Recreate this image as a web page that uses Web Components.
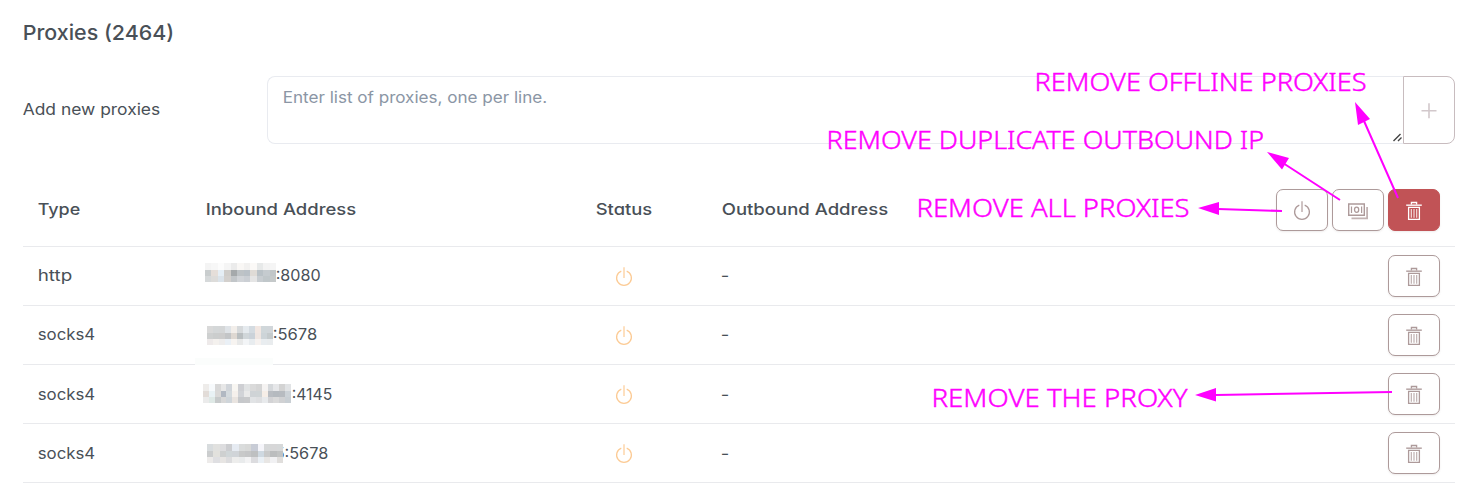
<!DOCTYPE html>
<html lang="en">
<head>
<meta charset="utf-8">
<title>Proxies</title>
<style>
html,body{margin:0;background:#fff}
body{width:1481px;height:490px;overflow:hidden;font-family:Inter,"Open Sans",sans-serif;font-size:16px;color:#495057;font-feature-settings:"cv11"}
</style>
</head>
<body>
<proxy-page></proxy-page>
<script>
const define = (name, html, setup) => {
  const t = document.createElement('template');
  t.innerHTML = html;
  customElements.define(name, class extends HTMLElement {
    connectedCallback() {
      if (this.shadowRoot) return;
      this.attachShadow({mode: 'open'}).append(t.content.cloneNode(true));
      if (setup) setup(this, this.shadowRoot);
    }
  });
};

/* Text run stretched to a given width. */
define('fit-text', `<style>:host{display:inline-block;white-space:nowrap;line-height:24px}span{display:inline-block;transform-origin:0 50%}</style><span><slot></slot></span>`,
(el, root) => {
  const s = root.querySelector('span');
  const want = +el.getAttribute('w');
  el.style.width = want + 'px';
  s.style.transform = `translate(-.3px,var(--dy,-1px)) scaleX(${(want - .5) / s.getBoundingClientRect().width})`;
});

const icons = {
  power: `<path d="M6.3 4.1A7.4 7.4 0 1 0 11.7 4.1" stroke-width="1.25"/><path d="M9 .2V11" stroke-width="1.6" opacity=".75"/>`,
  trash: `<path d="M1.2 4.2H16.8" stroke-width="1.6" opacity=".85"/><path d="M6.4 3.5V1.5H11.6V3.5M3.6 6.4H14.4V18.4H3.6Z" stroke-width="1.3"/><path d="M6.3 8V16.8M9 8V16.8M11.7 8V16.8" stroke-width="1.1" opacity=".85"/>`,
  cash: `<path d="M-.3 3H15.3V14.2H-.3Z" stroke-width="1.4"/><path d="M2.5 5.4V12M12.6 5.4V12" stroke-width="1.2"/><ellipse cx="7.6" cy="8.7" rx="2.1" ry="2.6" stroke-width="1.3"/><path d="M18.1 6V17.4H2.5" stroke-width="1.8" opacity=".75"/>`,
  plus: `<path d="M1.5 9.7H16.5M9 2.2V17.2" stroke-width="1.6"/>`
};
define('line-icon', `<style>:host{display:block;width:18px;height:19px}svg{display:block;overflow:visible}</style><svg width="18" height="19" viewBox="0 0 18 19" fill="none" stroke="currentColor"></svg>`,
(el, root) => { root.querySelector('svg').innerHTML = icons[el.getAttribute('name')]; });

define('icon-button', `<style>
:host{display:block;width:52px;height:42px;flex:none;color:#ad9a9a}
button{box-sizing:border-box;width:100%;height:100%;margin:0;padding:1px 0 0;display:flex;align-items:center;justify-content:center;background:#fff;border:1px solid #ad9a9a;border-radius:7px;color:inherit;box-shadow:0 1px 2px rgba(90,70,70,.10)}
:host([danger]) button{background:#c15356;border-color:#c15356;color:#fff}
:host([joined]){height:68px}
:host([joined]) button{border-color:#c8bcbf;border-radius:0 8px 8px 0;color:#d2c8cb;box-shadow:none}
</style><button><line-icon></line-icon></button>`,
(el, root) => {
  const i = document.createElement('line-icon');
  i.setAttribute('name', el.getAttribute('icon'));
  root.querySelector('line-icon').replaceWith(i);
});

/* Pixelated mask over the hidden part of an address. */
define('pixel-mask', `<style>:host{display:grid;grid-template-rows:7px 6px 6px;height:19px;flex:none;position:relative;z-index:1}</style>`,
(el, root) => {
  const rows = el.getAttribute('colors').split('|').map(r => r.trim().split(' '));
  el.style.width = el.getAttribute('w') + 'px';
  el.style.gridTemplateColumns = `repeat(${rows[0].length},1fr)`;
  rows.flat().forEach(c => { const d = document.createElement('div'); d.style.background = '#' + c; root.append(d); });
});

define('proxy-row', `<style>
:host{display:grid;grid-template-columns:168px 359px 156px 1fr 67px;box-sizing:border-box;height:59px;align-items:center;border-bottom:1px solid #e9eaed;padding-left:15px}
.address{display:flex;align-items:center;height:24px}
.status{color:#fccb95;padding-left:50px;padding-top:1px}
.last{padding-right:15px}
</style>
<div><slot name="type"></slot></div><div class="address"><slot name="address"></slot></div><div class="status"><line-icon name="power"></line-icon></div><div><slot name="outbound"></slot></div><div class="last"><icon-button icon="trash"></icon-button></div>`);

define('note-layer', `<style>:host{position:absolute;left:0;top:0;pointer-events:none;z-index:3}svg{display:block}text{font-family:"Noto Sans","Open Sans",sans-serif;font-weight:300;font-size:25.5px;font-feature-settings:normal;stroke:#f0f;stroke-width:.45px}</style>
<svg width="1481" height="490" fill="#f0f"><g stroke="#f0f" stroke-width="2">
<path d="M1398 198L1364 121M1340 200L1283 163M1282 211L1218 209M1392 392L1216 395"/></g>
<path d="M1355 102L1370 119L1358 125ZM1267 152L1289 158L1282 169.500ZM1198 208L1219 202V215ZM1195 395L1216 388V401.500Z"/>
<text x="1034.500" y="91" textLength="332" lengthAdjust="spacingAndGlyphs">REMOVE OFFLINE PROXIES</text>
<text x="826.500" y="149" textLength="437.500" lengthAdjust="spacingAndGlyphs">REMOVE DUPLICATE OUTBOUND IP</text>
<text x="916.500" y="217" textLength="273" lengthAdjust="spacingAndGlyphs">REMOVE ALL PROXIES</text>
<text x="931.500" y="407" textLength="256" lengthAdjust="spacingAndGlyphs">REMOVE THE PROXY</text></svg>`);

define('proxy-page', `<style>
:host{display:block;position:relative;width:1481px;height:490px;box-sizing:border-box;padding:21px 26px 0 23px}
h1{--dy:0px;margin:0;font-size:20.5px;font-weight:500;line-height:24px;height:55px}
.low{--dy:0px}
.add{display:flex;height:68px;align-items:stretch}
.label{width:244px;display:flex;align-items:center}
.field{flex:1;box-sizing:border-box;border:1px solid #e9ebf0;border-right:0;border-radius:8px 0 0 8px;padding:9px 15px 0;color:#8b96a5;position:relative}
.grip{position:absolute;right:1px;bottom:1px}
.head{display:grid;grid-template-columns:168px 389.500px 126px 1fr auto;align-items:center;box-sizing:border-box;height:73px;margin-top:30px;padding:1px 15px 2px;border-bottom:1px solid #e9eaed;font-weight:500}
.actions{display:flex;gap:4px}
.patch{position:absolute;left:195px;top:358px;width:78px;height:7px;background:#fbfdfc}
</style>
<h1><fit-text w="152">Proxies (2464)</fit-text></h1>
<div class="add"><div class="label"><fit-text w="138">Add new proxies</fit-text></div>
<div class="field"><fit-text w="265">Enter list of proxies, one per line.</fit-text><svg class="grip" width="9" height="9" fill="none" stroke="#444" stroke-width="1.4"><path d="M.5 8L7.500 1M5 8L8.500 4.500"/></svg></div>
<icon-button joined icon="plus"></icon-button></div>
<div class="head"><fit-text w="43">Type</fit-text><fit-text w="151">Inbound Address</fit-text><fit-text w="57">Status</fit-text><fit-text w="167">Outbound Address</fit-text>
<div class="actions"><icon-button icon="power"></icon-button><icon-button icon="cash"></icon-button><icon-button danger icon="trash"></icon-button></div></div>
<proxy-row><fit-text slot="type" w="35">http</fit-text>
<pixel-mask slot="address" w="71" style="margin:-7px 0 0 -1px" colors="f4f4f4 f7f7f7 fcfcfc f5f5f5 ebebeb f9f7f5 f2f1f0 fbf9f7 e7e9e9 f3f3f3 f5f5f5|c9cdce e5ded9 e5eef5 cfcdca a5a9ab bec3c6 bac1c7 dfdbd6 bac2c7 c5cbcf c1c6c8|d6d9da dddcda dbe3ea d3d0cd c2c6c9 d1d4d8 cbcfd4 e5e5e5 c8cdd1 c0c7ca c5c9ca"></pixel-mask><fit-text slot="address" w="45.5">:8080</fit-text><fit-text slot="outbound" w="9">-</fit-text></proxy-row>
<proxy-row><fit-text slot="type" w="58">socks4</fit-text>
<pixel-mask slot="address" w="66" style="margin:1px 0 0 1px" colors="d9d9d9 d4d7d8 d4d6d7 dfe3e7 f2eeea d6d9db e5eaee d4dbe1 f2e7e2 d0d7da d1d6da|ced0d0 cbcdcd cccccc c3c5c7 ded8d2 b9bec0 d0d6d9 cbd2d9 efe6e2 cdd4d8 c5cbcd|eeeaea f4f1ee eeeded eaf0f6 f7f4f1 e8e9e9 f3f5f7 e8ecef f6f2f0 e9edf0 e9ecee"></pixel-mask><fit-text slot="address" w="45">:5678</fit-text><fit-text slot="outbound" w="9">-</fit-text></proxy-row>
<proxy-row class="low"><fit-text slot="type" w="58">socks4</fit-text>
<pixel-mask slot="address" w="88" style="margin:-1px 1px 0 -3px" colors="eeecea f7fafc d8d8d8 e7e7e7 d1d5da f8f6f2 cecfd3 e1e3e4 dadada d5d5d5 f5f3f2 d5d8db e6e7e9 d3d3d3 e1e3e5|e2dcd8 e9f2f5 dad9d8 b1b8c2 d4dade f5f0ec d1d3d7 e9e9e9 cfd3d6 cfd4d6 f6eee7 b9bdc2 b5babf b7bbc0 ccd2d7|ebebeb dfe9e6 c7cacb d8d8d8 cfd5da e9e4e0 c6c8cb c8c9cb e1e3e5 dedfe1 e8eaec d3d3d5 dadada d0d1d3 c9cfd4"></pixel-mask><fit-text slot="address" w="41">:4145</fit-text><fit-text slot="outbound" w="9">-</fit-text></proxy-row>
<proxy-row class="low"><fit-text slot="type" w="58">socks4</fit-text>
<pixel-mask slot="address" w="76" style="margin:1px -8px 0 1px" colors="d8dcde e1e1df dddddf cccdd0 e6ebf2 dadcdc d8d9d8 c8ccd6 f5f5fa d6d8d9 d7d7d8 d6d8d9|cbcdce e2e1dd ced0d0 d0d6d8 d0d4d8 c8c9c9 c5c6c7 bec0c1 cfd9e1 c9caca bbbdbe c1c3c3|edebea dfdfe2 e7e5e3 dcdcde ededec e9ebec f3f3f4 dcdcdf eaf0f5 e8e6e4 f1f1f3 e0dedc"></pixel-mask><fit-text slot="address" w="54">5:5678</fit-text><fit-text slot="outbound" w="9">-</fit-text></proxy-row>
<div class="patch"></div><note-layer></note-layer>`);
</script>
</body>
</html>
